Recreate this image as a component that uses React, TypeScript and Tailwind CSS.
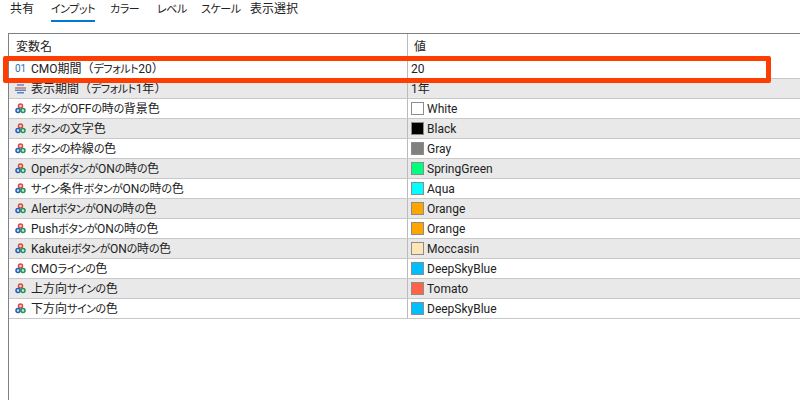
const font = '[font-family:Roboto,"Noto_Sans_CJK_JP",sans-serif] [font-feature-settings:"palt"]';

const tabs = [
  { label: '共有', w: 'w-[41px]' },
  { label: 'インプット', w: 'w-[59px]', active: true },
  { label: 'カラー', w: 'w-[47px]' },
  { label: 'レベル', w: 'w-[44px]' },
  { label: 'スケール', w: 'w-[49px]' },
  { label: '表示選択', w: 'w-[60px]' },
];

type Row = { name: string; value: string; swatch?: string; icon?: 'num' | 'enum' };

const rows: Row[] = [
  { name: 'CMO期間（デフォルト20）', value: '20', icon: 'num' },
  { name: '表示期間（デフォルト1年）', value: '1年', icon: 'enum' },
  { name: 'ボタンがOFFの時の背景色', value: 'White', swatch: '#ffffff' },
  { name: 'ボタンの文字色', value: 'Black', swatch: '#000000' },
  { name: 'ボタンの枠線の色', value: 'Gray', swatch: '#808080' },
  { name: 'OpenボタンがONの時の色', value: 'SpringGreen', swatch: '#00ff7f' },
  { name: 'サイン条件ボタンがONの時の色', value: 'Aqua', swatch: '#00ffff' },
  { name: 'AlertボタンがONの時の色', value: 'Orange', swatch: '#ffa500' },
  { name: 'PushボタンがONの時の色', value: 'Orange', swatch: '#ffa500' },
  { name: 'KakuteiボタンがONの時の色', value: 'Moccasin', swatch: '#ffe4b5' },
  { name: 'CMOラインの色', value: 'DeepSkyBlue', swatch: '#00bfff' },
  { name: '上方向サインの色', value: 'Tomato', swatch: '#ff6347' },
  { name: '下方向サインの色', value: 'DeepSkyBlue', swatch: '#00bfff' },
];

// kana is narrower than kanji in the original UI font
function Label({ text }: { text: string }) {
  const parts = text.split(/([ぁ-んァ-ヶー]+|[（）])/).filter(Boolean);
  return (
    <>
      {parts.map((p, i) =>
        /^[（）]$/.test(p) ? (
          <span key={i} className="[font-feature-settings:normal]">{p}</span>
        ) : /^[ぁ-んァ-ヶー]/.test(p) ? (
          <span key={i} className="text-[11px] tracking-[-0.45px]">{p}</span>
        ) : (
          <span key={i}>{p}</span>
        ),
      )}
    </>
  );
}

function ColorIcon() {
  return (
    <svg width="11" height="11" viewBox="0 0 11 11" fill="none" strokeWidth="1.5">
      <circle cx="5.5" cy="3" r="2" stroke="#d8483f" fill="#f6d5d2" />
      <circle cx="3" cy="7.6" r="2" stroke="#1f62b0" fill="#cfe0f2" />
      <circle cx="8" cy="7.6" r="2" stroke="#23915a" fill="#cdeadb" />
    </svg>
  );
}

function EnumIcon() {
  return (
    <svg width="11" height="10" viewBox="0 0 11 10" fill="none" strokeWidth="1.2">
      <path d="M2 1h7" stroke="#2f6fc0" />
      <path d="M0 4h11" stroke="#d8483f" />
      <path d="M0 6.2h11" stroke="#2f6fc0" />
      <path d="M2 8.8h7" stroke="#2f6fc0" />
    </svg>
  );
}

export default function App() {
  return (
    <div className={`relative w-[800px] h-[400px] overflow-hidden bg-white text-[12px] text-[#222] ${font}`}>
      <div className="flex h-[33px] items-start pl-[10px]">
        {tabs.map((t) => (
          <div key={t.label} className={`${t.w} shrink-0`}>
            <div className={`inline-block h-[22px] whitespace-nowrap leading-[18px] ${t.active ? 'border-b-2 border-[#0078d4]' : ''}`}>
              <Label text={t.label} />
            </div>
          </div>
        ))}
      </div>

      <div className="ml-[8px] h-[367px] border-l border-t border-[#808080]">
        <div className="flex h-[25px] items-center">
          <div className="w-[398px] pl-[7px] pt-px">変数名</div>
          <div className="h-full border-l border-[#bbb] pl-[6px] pt-px leading-[25px]">値</div>
        </div>
        {rows.map((r, i) => (
          <div
            key={r.name}
            className={`flex h-[20px] items-center border-b border-[#c8c8c8] ${i % 2 === 1 ? 'bg-[#e9e9e9]' : 'bg-white'}`}
          >
            <div className="flex w-[398px] items-center">
              <div className="flex w-[22px] justify-center pl-px">
                {r.icon === 'num' ? (
                  <span className="text-[10px] leading-none text-[#2f6fa8]">01</span>
                ) : r.icon === 'enum' ? (
                  <EnumIcon />
                ) : (
                  <ColorIcon />
                )}
              </div>
              <span className="whitespace-nowrap pt-px">
                <Label text={r.name} />
              </span>
            </div>
            <div className="flex h-full items-center gap-[3px] border-l border-[#bbb] pl-[3px]">
              {r.swatch && (
                <span className="h-[13px] w-[13px] border border-[#8c8c8c]" style={{ backgroundColor: r.swatch }} />
              )}
              <span>{r.value}</span>
            </div>
          </div>
        ))}
      </div>

      <div className="absolute left-[3px] top-[56px] h-[27px] w-[768px] rounded-[2px] border-[5px] border-[#ff3d00]" />
    </div>
  );
}
